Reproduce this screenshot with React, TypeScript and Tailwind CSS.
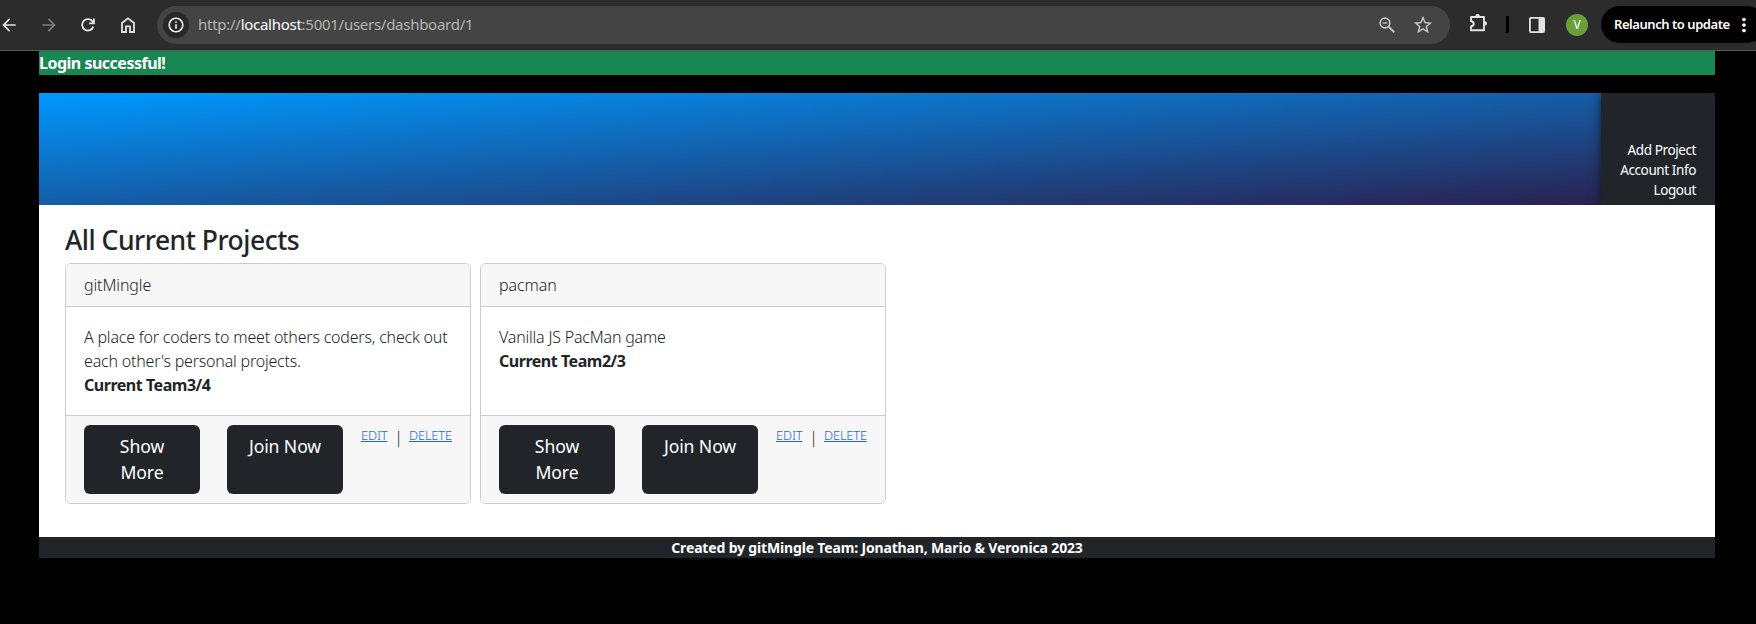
import React from 'react';
import { MdArrowBack, MdArrowForward, MdInfoOutline, MdMoreVert, MdStarBorder } from 'react-icons/md';

type Project = { name: string; description: string; team: string };

const projects: Project[] = [
  {
    name: 'gitMingle',
    description: "A place for coders to meet others coders, check out each other's personal projects.",
    team: '3/4',
  },
  { name: 'pacman', description: 'Vanilla JS PacMan game', team: '2/3' },
];

function ReloadIcon() {
  return (
    <svg className="size-[14px]" viewBox="0 0 14 14" fill="none" stroke="#e3e3e3" strokeWidth="1.9">
      <path d="M12.3 8.6A5.7 5.7 0 1 1 11.6 3.6L12.6 5" />
      <path d="M12.9 0.6V5.4H8.1" />
    </svg>
  );
}

function HomeIcon() {
  return (
    <svg className="h-[16px] w-[14px]" viewBox="0 0 14 16" fill="none" stroke="#e3e3e3" strokeWidth="1.8">
      <path d="M1 15V6L7 1.4L13 6V15H9V9.4H5V15Z" />
    </svg>
  );
}

function ZoomOutIcon() {
  return (
    <svg className="size-[16px]" viewBox="0 0 16 16" fill="none" stroke="#c7c7c7" strokeWidth="1.7">
      <circle cx="6" cy="6" r="4.8" />
      <path d="M9.6 9.6L15.2 15.2" strokeWidth="2" />
      <path d="M3.8 6H8.2" strokeWidth="1.4" />
    </svg>
  );
}

function PuzzleIcon() {
  return (
    <svg className="h-[19px] w-[19px]" viewBox="0 0 19 19">
      <path
        d="M2 4H15V17.2H2V13.2C5.6 13 5.6 8.4 2 8.2Z"
        fill="none"
        stroke="#e3e3e3"
        strokeWidth="1.9"
        strokeLinejoin="round"
      />
      <path d="M6.3 3.6A2.3 2.6 0 0 1 10.9 3.6Z" fill="#e3e3e3" />
      <path d="M15.4 8.2A2.6 2.3 0 0 1 15.4 12.8Z" fill="#e3e3e3" />
    </svg>
  );
}

function SidePanelIcon() {
  return (
    <svg className="size-[16px]" viewBox="0 0 16 16">
      <rect x="0.9" y="0.9" width="14.2" height="14.2" rx="1" fill="none" stroke="#e3e3e3" strokeWidth="1.8" />
      <path d="M9.5 1H15V15H9.5Z" fill="#e3e3e3" />
    </svg>
  );
}

function BrowserBar() {
  return (
    <div className="flex h-[51px] w-full items-start overflow-hidden border-b border-[#5a5a5a] bg-[#2c2c2c]">
      <div className="flex h-[49px] w-[157px] shrink-0 items-center">
        <MdArrowBack className="-ml-px size-5 shrink-0 text-[#e3e3e3]" />
        <MdArrowForward className="ml-5 size-5 shrink-0 text-[#7d7d7d]" />
        <div className="ml-[22px] shrink-0">
          <ReloadIcon />
        </div>
        <div className="ml-[26px] shrink-0">
          <HomeIcon />
        </div>
      </div>
      <div className="mt-1.5 flex h-[38px] w-[1293px] shrink-0 items-center rounded-full bg-[#444444] pr-[16px] pl-1.5">
        <div className="flex size-[26px] items-center justify-center rounded-full bg-[#282828]">
          <MdInfoOutline className="size-[18px] text-white" />
        </div>
        <div className="ml-[9px] flex-1 pb-0.5 text-[15px] tracking-[-0.27px] text-[#b4b4b4]">
          http://<span className="text-white">localhost</span>:5001/users/dashboard/1
        </div>
        <ZoomOutIcon />
        <MdStarBorder className="ml-[17px] size-[22px] text-[#c7c7c7]" />
      </div>
      <div className="flex h-[49px] shrink-0 items-center pl-[19px]">
        <div className="mb-1">
          <PuzzleIcon />
        </div>
        <div className="ml-[18px] h-[17px] w-[3px] bg-black" />
        <div className="ml-5">
          <SidePanelIcon />
        </div>
        <div className="ml-[21px] flex size-[22px] items-center justify-center rounded-full bg-[#689f38] text-[12px] text-white">
          V
        </div>
      </div>
      <div className="mt-1.5 ml-[13px] flex h-[37px] w-[164px] shrink-0 items-center rounded-full bg-black pl-[13px] text-[13px] font-semibold whitespace-nowrap text-white">
        <span className="w-[117px] tracking-[-0.45px]">Relaunch to update</span>
        <MdMoreVert className="ml-[2px] size-[22px] shrink-0" />
      </div>
    </div>
  );
}

function ActionButton({ children }: { children: React.ReactNode }) {
  return (
    <button className="h-[69px] w-[116px] rounded-md bg-[#212529] px-4 pt-2 pb-[9px] text-[17.6px] leading-[26px] font-normal tracking-[-0.1px] text-white">
      <div className="h-full">{children}</div>
    </button>
  );
}

function ProjectCard({ project }: { project: Project }) {
  return (
    <div className="flex h-[241px] w-[406px] flex-col overflow-hidden rounded-md border border-[#cccccc] bg-white font-[350]">
      <div className="flex h-[43px] shrink-0 items-center border-b border-[#cccccc] bg-[#f7f7f7] px-[18px] tracking-[-0.1px]">
        {project.name}
      </div>
      <div className="flex-1 pt-[18px] pl-[18px] leading-6">
        <p className="w-[372px] tracking-[-0.2px]">{project.description}</p>
        <p className="font-bold tracking-[-0.47px]">Current Team{project.team}</p>
      </div>
      <div className="flex h-[88px] shrink-0 items-start border-t border-[#cccccc] bg-[#f7f7f7] pt-[9px] pl-[18px]">
        <ActionButton>Show More</ActionButton>
        <div className="w-[27px]" />
        <ActionButton>Join Now</ActionButton>
        <div className="ml-[18px] flex items-start text-[12.8px] leading-[20px] tracking-[-0.15px] text-[#1f66d6]">
          <a href="#" className="w-[27px] underline">EDIT</a>
          <span className="w-[21px] pt-0.5 text-center text-[16px] text-[#212529]">|</span>
          <a href="#" className="underline">DELETE</a>
        </div>
      </div>
    </div>
  );
}

export default function App() {
  return (
    <div className="h-[624px] w-[1756px] overflow-hidden bg-black font-['Noto_Sans','Open_Sans',sans-serif] text-[16px] text-[#212529]">
      <BrowserBar />
      <div className="mx-auto w-[1676px] -translate-x-px">
        <div className="h-6 bg-[#198754] leading-6 font-bold tracking-[-0.5px] text-white">Login successful!</div>
        <header className="mt-[18px] flex h-[112px] overflow-hidden">
          <div className="flex-1 bg-[linear-gradient(to_bottom_right,#0099ff,#2b214f)]" />
          <nav className="flex w-[114px] flex-col items-end justify-end bg-[#212529] pr-[19px] pb-[5px] text-[13.5px] leading-5 tracking-[-0.4px] text-white shadow-[0_0_10px_rgba(0,0,0,0.6)]">
            <a href="#">Add Project</a>
            <a href="#">Account Info</a>
            <a href="#">Logout</a>
          </nav>
        </header>
        <main className="h-[332px] bg-white px-[26px] pt-[18px]">
          <h1 className="h-10 text-[26.5px] leading-[34px] font-medium tracking-[-0.5px]">All Current Projects</h1>
          <div className="flex gap-[9px]">
            {projects.map((project) => (
              <ProjectCard key={project.name} project={project} />
            ))}
          </div>
        </main>
        <footer className="h-[21px] bg-[#212529] text-center text-[14px] leading-[21px] font-bold tracking-[-0.16px] text-white">
          Created by gitMingle Team: Jonathan, Mario &amp; Veronica 2023
        </footer>
      </div>
    </div>
  );
}
